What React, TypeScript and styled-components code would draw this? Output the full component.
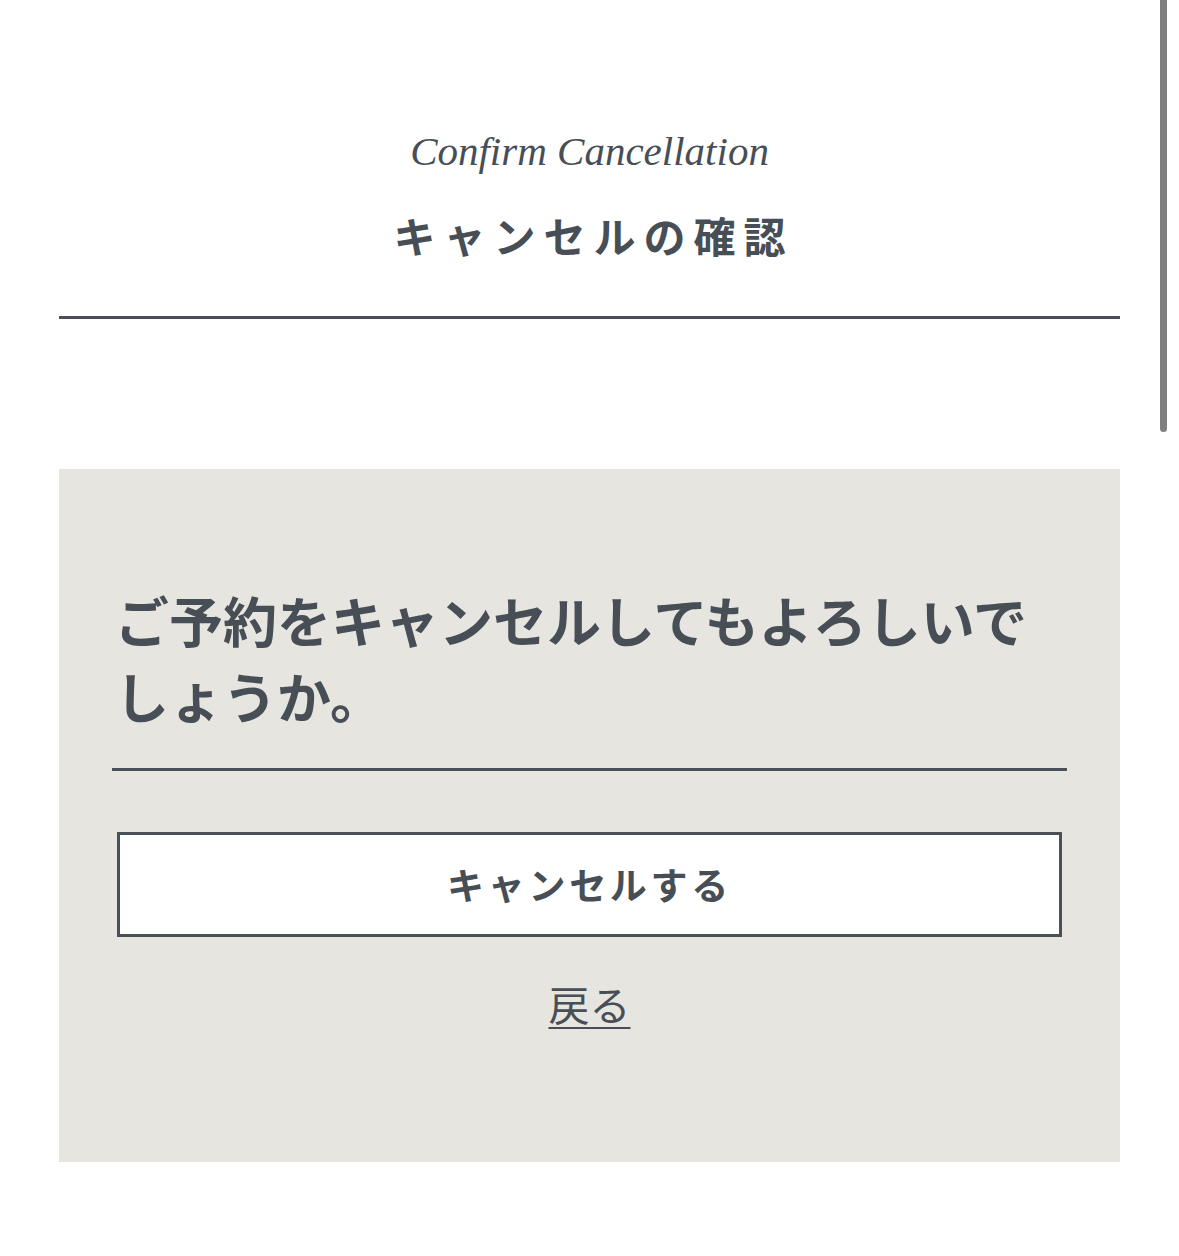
import styled, { createGlobalStyle } from 'styled-components';

const GlobalStyle = createGlobalStyle`
  html, body {
    margin: 0;
    padding: 0;
    background: #ffffff;
  }

  body {
    font-family: 'Noto Sans CJK JP', 'Noto Sans', sans-serif;
    color: #474e55;
  }
`;

const Page = styled.div`
  position: relative;
  width: 1179px;
  min-height: 1256px;
  padding: 0 59px;
  box-sizing: border-box;
  background: #ffffff;
`;

const ScrollIndicator = styled.div`
  position: absolute;
  top: 0;
  right: 12px;
  width: 7px;
  height: 432px;
  border-radius: 0 0 4px 4px;
  background: #7f7f7f;
`;

const Header = styled.header`
  display: flex;
  flex-direction: column;
  align-items: center;
  padding-top: 126px;
  padding-bottom: 52px;
  border-bottom: 3px solid #4a5057;
`;

const EnglishTitle = styled.h1`
  margin: 0;
  font: italic 400 41px/50px 'Liberation Serif', serif;
  color: #474e55;
`;

const JapaneseTitle = styled.h2`
  margin: 30px 0 0;
  padding-left: 8px;
  font: 700 42px/58px 'Noto Sans CJK JP', sans-serif;
  letter-spacing: 8px;
  color: #474e55;
`;

const Panel = styled.section`
  margin-top: 150px;
  padding: 113px 53px 131px;
  background: #e6e5df;
`;

const Question = styled.p`
  margin: 0 0 0 3px;
  padding-bottom: 34px;
  font: 700 54px/76px 'Noto Sans CJK JP', sans-serif;
  color: #474e55;
`;

const Divider = styled.hr`
  margin: 0;
  border: none;
  border-top: 3px solid #4a5057;
`;

const Actions = styled.div`
  display: flex;
  flex-direction: column;
  align-items: center;
  padding: 61px 5px 0;
`;

const CancelButton = styled.button`
  width: 100%;
  height: 105px;
  border: 3px solid #4a5057;
  background: #ffffff;
  font: 700 37px/1 'Noto Sans CJK JP', sans-serif;
  letter-spacing: 0.1em;
  color: #474e55;
  cursor: pointer;
`;

const BackLink = styled.a`
  margin-top: 38px;
  font: 400 41px/56px 'Noto Sans CJK JP', sans-serif;
  color: #474e55;
  text-decoration: underline;
  text-decoration-thickness: 2px;
  text-underline-offset: 6px;
  cursor: pointer;
`;

const App = () => {
  return (
    <>
      <GlobalStyle />
      <Page>
        <ScrollIndicator />
        <Header>
          <EnglishTitle>Confirm Cancellation</EnglishTitle>
          <JapaneseTitle>キャンセルの確認</JapaneseTitle>
        </Header>
        <Panel>
          <Question>ご予約をキャンセルしてもよろしいでしょうか。</Question>
          <Divider />
          <Actions>
            <CancelButton>キャンセルする</CancelButton>
            <BackLink>戻る</BackLink>
          </Actions>
        </Panel>
      </Page>
    </>
  );
};

export default App;
